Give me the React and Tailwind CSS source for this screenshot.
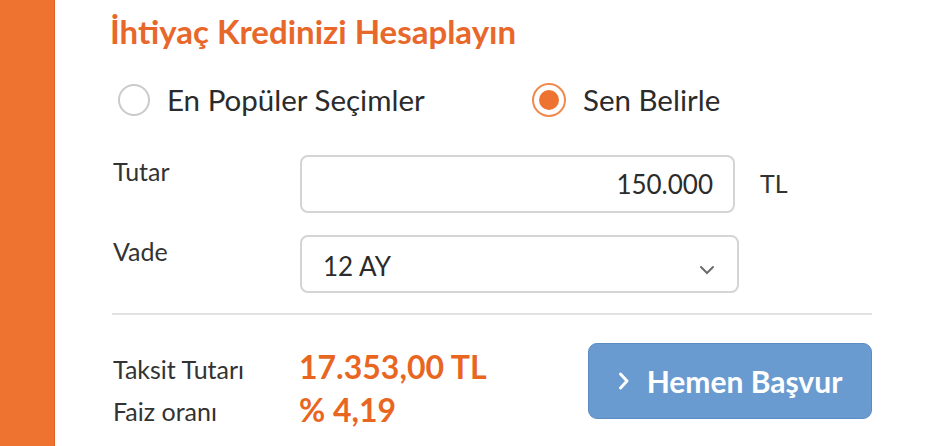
import React, { useState } from "react";

function Radio({ checked, label, onClick }) {
  return (
    <button type="button" onClick={onClick} className="flex items-center gap-[17px]">
      {checked ? (
        <span className="w-[34px] h-[34px] rounded-full border-2 border-[#f08a4e] flex items-center justify-center">
          <span className="w-[20px] h-[20px] rounded-full bg-[#ee7330]" />
        </span>
      ) : (
        <span className="w-[32px] h-[32px] rounded-full border-2 border-[#cacaca]" />
      )}
      <span className="text-[29.5px] leading-[36px] text-[#2b2b2b]">{label}</span>
    </button>
  );
}

export default function App() {
  const [mode, setMode] = useState("custom");

  return (
    <div className="flex w-[934px] h-[446px] bg-white overflow-hidden font-['Lato',sans-serif]">
      <div className="w-[55px] shrink-0 bg-[#ee7330] border-r border-[#e4621f]" />

      <div className="pl-[55px] pt-[12px] w-[817px]">
        <h1 className="text-[33px] leading-[38px] font-bold text-[#e8672a]">İhtiyaç Kredinizi Hesaplayın</h1>

        <div className="flex items-center mt-[32px] pl-[8px]">
          <div className="w-[414px]">
            <Radio checked={mode === "popular"} label="En Popüler Seçimler" onClick={() => setMode("popular")} />
          </div>
          <Radio checked={mode === "custom"} label="Sen Belirle" onClick={() => setMode("custom")} />
        </div>

        <div className="mt-[37px] flex flex-col gap-[22px]">
          <div className="flex items-start">
            <label className="w-[190px] pl-[3px] text-[25px] leading-[32px] text-[#333]">Tutar</label>
            <div className="w-[435px] h-[58px] rounded-[8px] border-2 border-[#d4d4d4] flex items-center justify-end pr-[20px] text-[26px] text-[#2b2b2b]">
              150.000
            </div>
            <span className="ml-[25px] mt-[12px] text-[25px] leading-[32px] text-[#333]">TL</span>
          </div>

          <div className="flex items-start">
            <label className="w-[190px] pl-[3px] text-[25px] leading-[32px] text-[#333]">Vade</label>
            <div className="w-[439px] h-[58px] rounded-[8px] border-2 border-[#d4d4d4] flex items-center justify-between pl-[21px] pr-[22px] text-[26px] text-[#2b2b2b]">
              <span className="pt-[4px]">12 AY</span>
              <svg width="16" height="10" viewBox="0 0 16 10" className="mt-[12px]">
                <path d="M2 2 L8 8 L14 2" fill="none" stroke="#6b6b6b" strokeWidth="2" strokeLinecap="round" />
              </svg>
            </div>
          </div>
        </div>

        <div className="mt-[20px] ml-[2px] h-[2px] bg-[#e2e2e2]" />

        <div className="flex items-start mt-[28px] pl-[3px]">
          <div className="w-[186px] flex flex-col gap-[10px] pt-[10px]">
            <span className="text-[25px] leading-[32px] text-[#333]">Taksit Tutarı</span>
            <span className="text-[25px] leading-[32px] text-[#333]">Faiz oranı</span>
          </div>
          <div className="flex flex-col gap-[6px] pt-[5px] w-[289px]">
            <span className="text-[32px] leading-[37px] font-bold text-[#e8661f]">17.353,00 TL</span>
            <span className="text-[32px] leading-[37px] font-bold text-[#e8661f]">% 4,19</span>
          </div>
          <button
            type="button"
            className="w-[284px] h-[76px] rounded-[9px] bg-[#6a9bd0] border border-[#5b8cc2] flex items-center justify-center gap-[17px] text-white"
          >
            <svg width="12" height="20" viewBox="0 0 12 20">
              <path d="M2.5 3 L9 10 L2.5 17" fill="none" stroke="#fff" strokeWidth="3" strokeLinecap="round" strokeLinejoin="round" />
            </svg>
            <span className="text-[30px] font-bold leading-[36px]">Hemen Başvur</span>
          </button>
        </div>
      </div>
    </div>
  );
}
